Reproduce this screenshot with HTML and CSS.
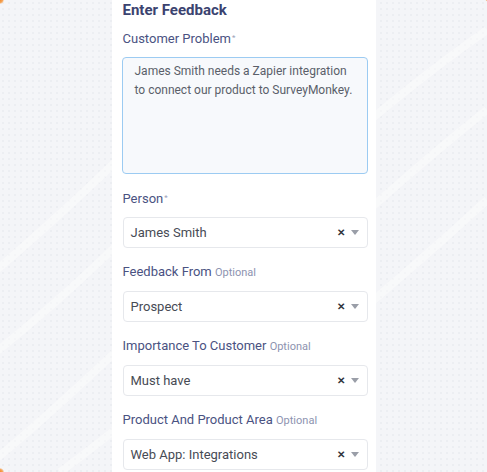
FILE: index.html
```html
<!DOCTYPE html>
<html lang="en">
<head>
<meta charset="utf-8">
<title>Enter Feedback</title>
<link rel="stylesheet" href="styles.css">
</head>
<body>
<div class="page">
  <svg class="waves" width="487" height="472" viewBox="0 0 487 472" aria-hidden="true">
    <path d="M-40 300 C 60 220, 160 120, 300 -20" />
    <path d="M-40 380 C 80 290, 200 170, 360 -20" />
    <path d="M-20 472 C 120 360, 300 160, 487 30" />
    <path d="M60 472 C 200 370, 360 210, 487 110" />
    <path d="M160 472 C 280 380, 400 280, 487 200" />
  </svg>
  <span class="corner corner-tl"></span>
  <span class="corner corner-bl"></span>
  <span class="corner corner-tr"></span>
  <main class="panel">
    <h1 class="title">Enter Feedback</h1>

    <div class="field">
      <label class="label">Customer Problem<span class="req">*</span></label>
      <div class="textarea">James Smith needs a Zapier integration to connect our product to SurveyMonkey.</div>
    </div>

    <div class="field">
      <label class="label">Person<span class="req">*</span></label>
      <div class="select">
        <span class="value">James Smith</span>
        <span class="clear">✕</span>
        <span class="caret"></span>
      </div>
    </div>

    <div class="field">
      <label class="label">Feedback From <span class="opt">Optional</span></label>
      <div class="select">
        <span class="value">Prospect</span>
        <span class="clear">✕</span>
        <span class="caret"></span>
      </div>
    </div>

    <div class="field">
      <label class="label">Importance To Customer <span class="opt">Optional</span></label>
      <div class="select">
        <span class="value">Must have</span>
        <span class="clear">✕</span>
        <span class="caret"></span>
      </div>
    </div>

    <div class="field">
      <label class="label">Product And Product Area <span class="opt">Optional</span></label>
      <div class="select">
        <span class="value">Web App: Integrations</span>
        <span class="clear">✕</span>
        <span class="caret"></span>
      </div>
    </div>
  </main>
</div>
</body>
</html>
```

FILE: styles.css
```css
* { box-sizing: border-box; }

html, body {
  margin: 0;
  padding: 0;
}

body {
  font-family: Roboto, "Noto Sans", sans-serif;
  background: #f4f5f8;
}

.page {
  position: relative;
  width: 487px;
  height: 472px;
  overflow: hidden;
  display: flex;
  justify-content: center;
  background-color: #f4f5f8;
  background-image: radial-gradient(circle, #eceef2 0.8px, transparent 1.2px);
  background-size: 6px 6px;
}

.waves {
  position: absolute;
  left: 0;
  top: 0;
}

.waves path {
  fill: none;
  stroke: #fbfbfc;
  stroke-width: 8;
  opacity: 0.55;
}

.corner {
  position: absolute;
  width: 8px;
  height: 8px;
  border-radius: 50%;
  background: radial-gradient(circle, #f08a2c 0%, #f5a55a 45%, rgba(245,165,90,0) 75%);
}
.corner-tl { left: -4px; top: -4px; }
.corner-bl { left: -4px; bottom: -4px; }
.corner-tr { right: -5px; top: -5px; width: 7px; height: 7px; }

.panel {
  position: relative;
  width: 264px;
  height: 472px;
  background: #ffffff;
  padding: 0 8px 0 10px;
}

.title {
  margin: 0;
  font-size: 15px;
  line-height: 20px;
  font-weight: 700;
  color: #3b4370;
  padding-left: 1px;
}

.field {
  display: flex;
  flex-direction: column;
  margin-top: 9px;
}

.field + .field {
  margin-top: 15px;
}

.label {
  display: block;
  font-size: 13px;
  line-height: 18px;
  color: #4a5282;
  margin-bottom: 9px;
  padding-left: 1px;
  white-space: nowrap;
}

.req {
  font-size: 8px;
  color: #9aa0b8;
  vertical-align: 3px;
  margin-left: 1px;
}

.opt {
  font-size: 11px;
  color: #8d93b0;
}

.textarea {
  height: 117px;
  border: 1px solid #9ccbf2;
  border-radius: 4px;
  background: #f7f9fc;
  padding: 4px 8px 0 12px;
  font-size: 12px;
  line-height: 19px;
  color: #5a5f6a;
}

.select {
  display: flex;
  align-items: center;
  height: 31px;
  margin-left: 1px;
  border: 1px solid #e6e8ec;
  border-radius: 4px;
  background: #ffffff;
  padding: 0 8px 0 7px;
  font-size: 13px;
  color: #474b55;
}

.value {
  flex: 1;
}

.clear {
  font-size: 9.5px;
  font-weight: 700;
  color: #30343c;
  margin-right: 6px;
}

.caret {
  width: 0;
  height: 0;
  border-left: 4px solid transparent;
  border-right: 4px solid transparent;
  border-top: 5px solid #9a9ea8;
}
```
